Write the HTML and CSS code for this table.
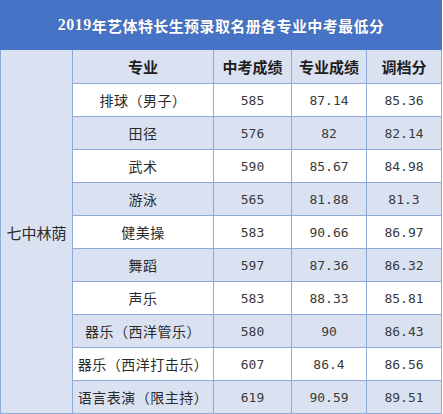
FILE: index.html
```html
<!DOCTYPE html>
<html lang="zh">
<head>
<meta charset="utf-8">
<title>2019年艺体特长生预录取名册各专业中考最低分</title>
<link rel="stylesheet" href="styles.css">
</head>
<body>
<div class="sheet">
  <div class="title"><span class="yr">2019</span>年艺体特长生预录取名册各专业中考最低分</div>
  <div class="grid">
    <div class="cell school">七中林荫</div>
    <div class="cell head">专业</div>
    <div class="cell head">中考成绩</div>
    <div class="cell head">专业成绩</div>
    <div class="cell head">调档分</div>

    <div class="cell txt">排球（男子）</div><div class="cell num">585</div><div class="cell num">87.14</div><div class="cell num">85.36</div>
    <div class="cell txt alt">田径</div><div class="cell num alt">576</div><div class="cell num alt">82</div><div class="cell num alt">82.14</div>
    <div class="cell txt">武术</div><div class="cell num">590</div><div class="cell num">85.67</div><div class="cell num">84.98</div>
    <div class="cell txt alt">游泳</div><div class="cell num alt">565</div><div class="cell num alt">81.88</div><div class="cell num alt">81.3</div>
    <div class="cell txt">健美操</div><div class="cell num">583</div><div class="cell num">90.66</div><div class="cell num">86.97</div>
    <div class="cell txt alt">舞蹈</div><div class="cell num alt">597</div><div class="cell num alt">87.36</div><div class="cell num alt">86.32</div>
    <div class="cell txt">声乐</div><div class="cell num">583</div><div class="cell num">88.33</div><div class="cell num">85.81</div>
    <div class="cell txt alt">器乐（西洋管乐）</div><div class="cell num alt">580</div><div class="cell num alt">90</div><div class="cell num alt">86.43</div>
    <div class="cell txt">器乐（西洋打击乐）</div><div class="cell num">607</div><div class="cell num">86.4</div><div class="cell num">86.56</div>
    <div class="cell txt alt">语言表演（限主持）</div><div class="cell num alt">619</div><div class="cell num alt">90.59</div><div class="cell num alt">89.51</div>
  </div>
</div>
</body>
</html>
```
FILE: styles.css
```css
html, body {
  margin: 0;
  padding: 0;
  background: #ffffff;
}
body {
  width: 443px;
  height: 414px;
  overflow: hidden;
  font-family: "Noto Sans CJK SC", "Noto Sans", sans-serif;
}
.sheet {
  width: 442px;
}
.title {
  height: 50px;
  background: #4673c5;
  color: #ffffff;
  font-weight: 700;
  font-size: 15px;
  display: flex;
  align-items: center;
  justify-content: center;
  letter-spacing: 0.4px;
  text-shadow: 0 0 1px rgba(30, 50, 100, 0.5);
}
.title .yr {
  font-family: "Liberation Serif", serif;
  font-size: 16px;
  letter-spacing: 0.5px;
}
.grid {
  display: grid;
  grid-template-columns: 71px 140px 77px 74px 74px;
  grid-template-rows: 33px repeat(10, 32px);
  gap: 1px;
  padding: 0 1px 1px 1px;
  background: #8fa9d9;
}
.cell {
  background: #ffffff;
  display: flex;
  align-items: center;
  justify-content: center;
  color: #2a2a2a;
  white-space: nowrap;
}
.alt {
  background: #dae2f2;
}
.school {
  grid-row: 1 / span 11;
  background: #dae2f2;
  font-size: 15px;
  padding-top: 2px;
}
.head {
  background: #dae2f2;
  font-weight: 700;
  font-size: 15px;
  color: #1e1e1e;
}
.txt {
  font-size: 14px;
  letter-spacing: 0.5px;
}
.num {
  font-family: "DejaVu Sans Mono", "Liberation Mono", monospace;
  font-size: 13px;
  color: #3a3a3a;
}
```
